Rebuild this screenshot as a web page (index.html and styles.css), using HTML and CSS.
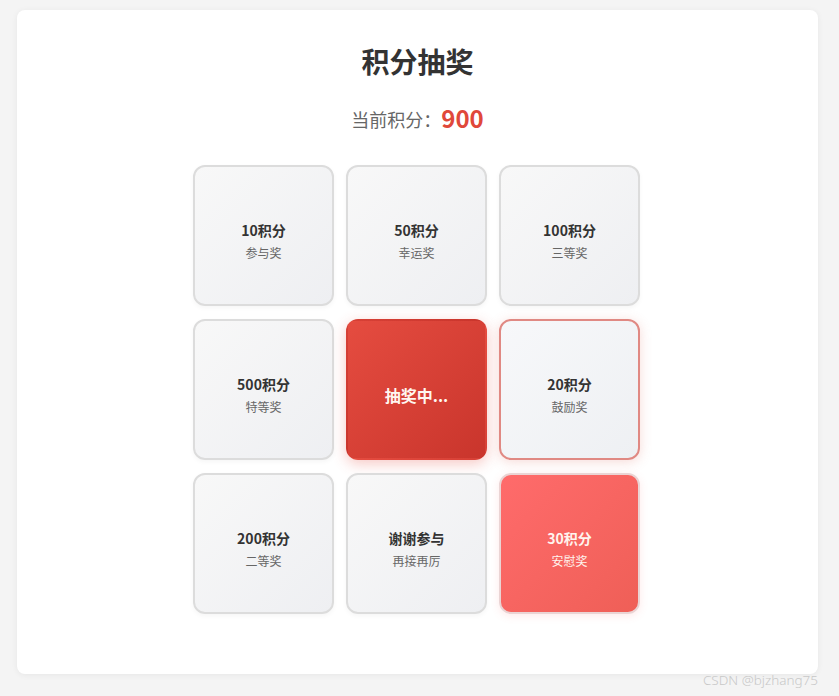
FILE: index.html
```html
<!DOCTYPE html>
<html lang="zh">
<head>
<meta charset="utf-8">
<title>积分抽奖</title>
<link rel="stylesheet" href="styles.css">
</head>
<body>
<div class="card">
  <h1 class="title">积分抽奖</h1>
  <div class="score">当前积分：<span class="score-num">900</span></div>
  <div class="grid">
    <div class="cell"><div class="name">10积分</div><div class="desc">参与奖</div></div>
    <div class="cell"><div class="name">50积分</div><div class="desc">幸运奖</div></div>
    <div class="cell"><div class="name">100积分</div><div class="desc">三等奖</div></div>
    <div class="cell"><div class="name">500积分</div><div class="desc">特等奖</div></div>
    <div class="cell start"><div class="start-text">抽奖中...</div></div>
    <div class="cell next"><div class="name">20积分</div><div class="desc">鼓励奖</div></div>
    <div class="cell"><div class="name">200积分</div><div class="desc">二等奖</div></div>
    <div class="cell"><div class="name">谢谢参与</div><div class="desc">再接再厉</div></div>
    <div class="cell active"><div class="name">30积分</div><div class="desc">安慰奖</div></div>
  </div>
</div>
<div class="watermark">CSDN @bjzhang75</div>
</body>
</html>
```
FILE: styles.css
```css
html, body {
  margin: 0;
  padding: 0;
}
body {
  background: #f4f4f4;
  font-family: "Noto Sans CJK SC", "Noto Sans", sans-serif;
  height: 696px;
  overflow: hidden;
  padding-top: 10px;
  box-sizing: border-box;
}
.card {
  margin: 0 21px 0 17px;
  height: 664px;
  background: #ffffff;
  border-radius: 8px;
  box-shadow: 0 1px 6px rgba(0, 0, 0, 0.06);
  padding-top: 33px;
  box-sizing: border-box;
}
.title {
  margin: 0;
  text-align: center;
  font-size: 28px;
  line-height: 36px;
  font-weight: 700;
  color: #333333;
}
.score {
  margin-top: 23px;
  text-align: center;
  font-size: 18px;
  line-height: 32px;
  color: #666666;
}
.score-num {
  font-size: 24px;
  font-weight: 700;
  color: #e0483a;
  vertical-align: -1px;
}
.grid {
  margin: 30px auto 0;
  width: 447px;
  display: grid;
  grid-template-columns: repeat(3, 141px);
  grid-auto-rows: 141px;
  column-gap: 12px;
  row-gap: 13px;
  transform: translateX(-1px);
}
.cell {
  box-sizing: border-box;
  border: 2px solid #dcdcdc;
  border-radius: 12px;
  background: linear-gradient(135deg, #f8f8f8 0%, #eeeff2 100%);
  box-shadow: 0 2px 5px rgba(0, 0, 0, 0.04);
  display: flex;
  flex-direction: column;
  align-items: center;
  justify-content: center;
  padding-top: 10px;
}
.name {
  font-size: 14px;
  line-height: 20px;
  font-weight: 700;
  color: #333333;
}
.desc {
  margin-top: 4px;
  font-size: 12px;
  line-height: 18px;
  color: #666666;
}
.start {
  border-color: transparent;
  background: linear-gradient(135deg, #e54c40 0%, #c9352c 100%);
  box-shadow: 0 4px 14px rgba(229, 76, 64, 0.3);
  padding-top: 0;
}
.start-text {
  font-size: 16px;
  line-height: 22px;
  font-weight: 700;
  color: #fff6f0;
  margin-top: 11px;
}
.next {
  border-color: #e08983;
  background: linear-gradient(135deg, #f7f8fa 0%, #eef0f3 100%);
  box-shadow: 0 2px 12px rgba(224, 110, 100, 0.25);
}
.active {
  border-color: #ead4d4;
  background: linear-gradient(135deg, #ff6b6b 0%, #ef5f57 100%);
  box-shadow: 0 2px 8px rgba(255, 107, 107, 0.15);
}
.active .name,
.active .desc {
  color: #fff4ee;
}
.watermark {
  text-align: right;
  margin-right: 21px;
  font-family: "Noto Sans", sans-serif;
  font-weight: 300;
  font-size: 13.5px;
  line-height: 12px;
  color: #c8c8c8;
}
```
